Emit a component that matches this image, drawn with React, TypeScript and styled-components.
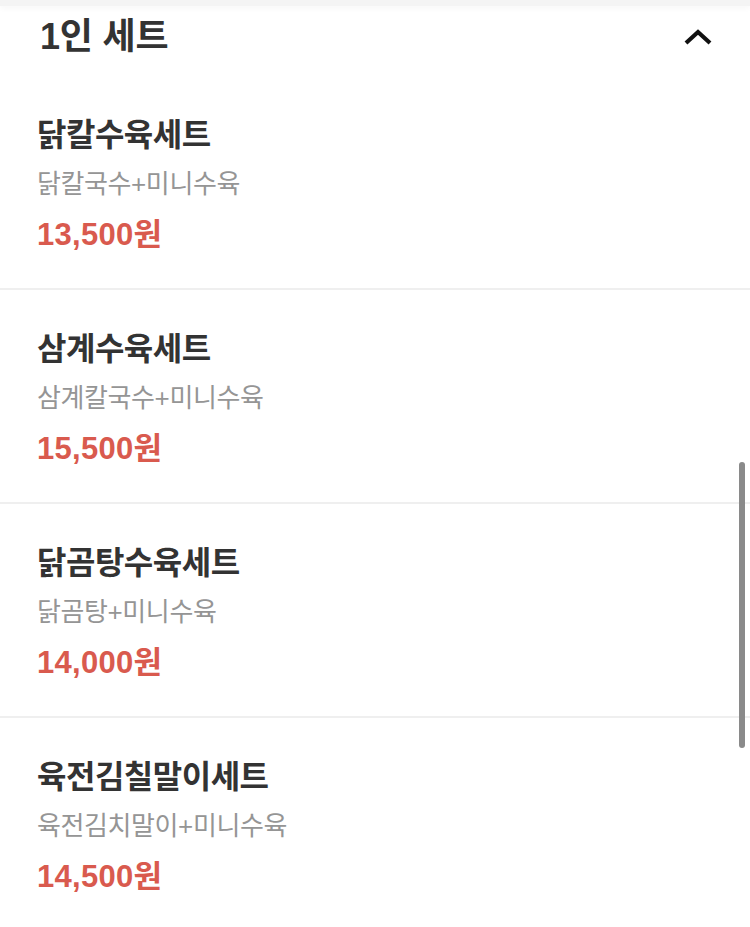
import React from "react";
import styled, { createGlobalStyle } from "styled-components";

const GlobalStyle = createGlobalStyle`
  html, body {
    margin: 0;
    padding: 0;
    background: #ffffff;
    overflow: hidden;
  }
  body {
    font-family: "Liberation Sans", "Noto Sans CJK KR", "Noto Sans", sans-serif;
  }
`;

const Page = styled.div`
  position: relative;
  width: 750px;
  height: 927px;
  overflow: hidden;
  background: #ffffff;
`;

const TopStrip = styled.div`
  height: 6px;
  background: #f4f4f4;
  box-shadow: 0 2px 6px rgba(0, 0, 0, 0.04);
`;

const Header = styled.div`
  display: flex;
  align-items: center;
  justify-content: space-between;
  height: 62px;
  padding: 0 37px 8px 40px;
`;

const HeaderTitle = styled.h2`
  margin: 0;
  font-size: 36px;
  line-height: 40px;
  font-weight: 700;
  color: #333333;
  letter-spacing: -0.2px;
`;

const List = styled.ul`
  list-style: none;
  margin: 0;
  padding: 0;
`;

const Item = styled.li`
  height: 212px;
  padding: 0 37px;
  border-bottom: 2px solid #efefef;
  box-sizing: content-box;
  display: flex;
  flex-direction: column;
`;

const Name = styled.div`
  margin-top: 41px;
  font-size: 32px;
  line-height: 36px;
  font-weight: 700;
  color: #333333;
  letter-spacing: -0.5px;
`;

const Desc = styled.div`
  margin-top: 16px;
  font-size: 26px;
  line-height: 30px;
  font-weight: 400;
  color: #959595;
  letter-spacing: -0.4px;
`;

const Price = styled.div`
  margin-top: 20px;
  font-size: 31px;
  line-height: 32px;
  font-weight: 700;
  color: #d95a4e;
  letter-spacing: 0.3px;
`;

const ScrollThumb = styled.div`
  position: absolute;
  right: 5px;
  top: 462px;
  width: 6px;
  height: 286px;
  border-radius: 3px;
  background: #8a8a8a;
`;

const Chevron = () => (
  <svg width="30" height="18" viewBox="0 0 30 18" fill="none">
    <polyline
      points="3,15 15,4 27,15"
      stroke="#111111"
      strokeWidth="4.2"
      strokeLinecap="butt"
      strokeLinejoin="miter"
    />
  </svg>
);

const sets = [
  { name: "닭칼수육세트", desc: "닭칼국수+미니수육", price: "13,500원" },
  { name: "삼계수육세트", desc: "삼계칼국수+미니수육", price: "15,500원" },
  { name: "닭곰탕수육세트", desc: "닭곰탕+미니수육", price: "14,000원" },
  { name: "육전김칠말이세트", desc: "육전김치말이+미니수육", price: "14,500원" },
];

export default function App() {
  return (
    <Page>
      <GlobalStyle />
      <TopStrip />
      <Header>
        <HeaderTitle>1인 세트</HeaderTitle>
        <Chevron />
      </Header>
      <List>
        {sets.map((s) => (
          <Item key={s.name}>
            <Name>{s.name}</Name>
            <Desc>{s.desc}</Desc>
            <Price>{s.price}</Price>
          </Item>
        ))}
      </List>
      <ScrollThumb />
    </Page>
  );
}
